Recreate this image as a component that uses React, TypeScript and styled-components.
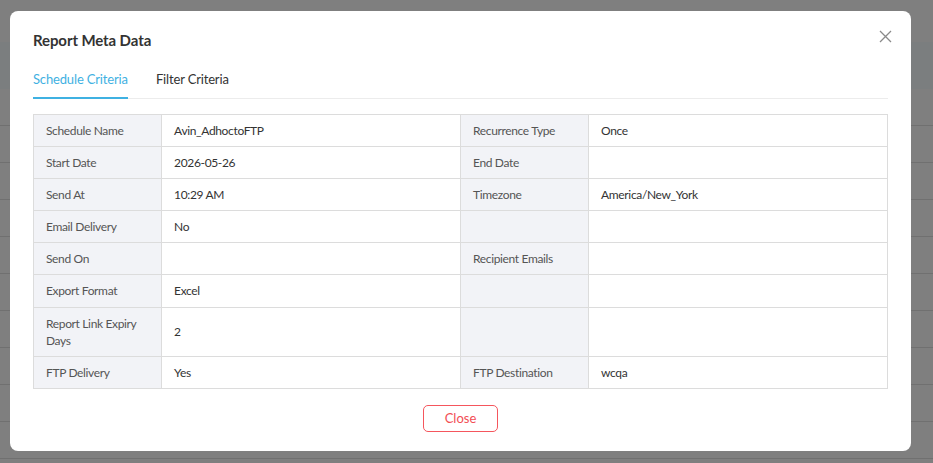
import styled, { createGlobalStyle } from 'styled-components'

const GlobalStyle = createGlobalStyle`
  html, body {
    margin: 0;
    padding: 0;
    background: #fefefe;
    font-family: Lato, 'Open Sans', sans-serif;
  }
  * {
    box-sizing: border-box;
  }
`

type Field = { label: string; value: string }
type Row = { left: Field; right: Field }

const rows: Row[] = [
  { left: { label: 'Schedule Name', value: 'Avin_AdhoctoFTP' }, right: { label: 'Recurrence Type', value: 'Once' } },
  { left: { label: 'Start Date', value: '2026-05-26' }, right: { label: 'End Date', value: '' } },
  { left: { label: 'Send At', value: '10:29 AM' }, right: { label: 'Timezone', value: 'America/New_York' } },
  { left: { label: 'Email Delivery', value: 'No' }, right: { label: '', value: '' } },
  { left: { label: 'Send On', value: '' }, right: { label: 'Recipient Emails', value: '' } },
  { left: { label: 'Export Format', value: 'Excel' }, right: { label: '', value: '' } },
  { left: { label: 'Report Link Expiry Days', value: '2' }, right: { label: '', value: '' } },
  { left: { label: 'FTP Delivery', value: 'Yes' }, right: { label: 'FTP Destination', value: 'wcqa' } },
]

const Page = styled.div`
  width: 933px;
  height: 463px;
  overflow: hidden;
  padding-top: 42px;
  background: #fefefe;
`

const PageHeader = styled.div`
  height: 47px;
  background: #f6fcff;
`

const PageRow = styled.div`
  height: 37px;
  border-bottom: 1px solid #e0e0e0;
`

const Overlay = styled.div`
  position: fixed;
  inset: 0;
  background: rgba(0, 0, 0, 0.5);
  padding: 11px 0 0 10px;
`

const Modal = styled.div`
  position: relative;
  width: 901px;
  height: 440px;
  background: #fff;
  border-radius: 8px;
  padding: 18px 23px 19px;
  display: flex;
  flex-direction: column;
`

const Title = styled.h2`
  margin: 0 0 12px;
  font-size: 15px;
  line-height: 22px;
  font-weight: 700;
  letter-spacing: -0.1px;
  color: #333;
`

const CloseIcon = styled.button`
  position: absolute;
  top: 13px;
  right: 14px;
  width: 24px;
  height: 24px;
  padding: 0;
  border: none;
  background: none;
  display: flex;
  align-items: center;
  justify-content: center;
  cursor: pointer;
`

const TabList = styled.div`
  display: flex;
  gap: 28px;
  border-bottom: 1px solid #ececec;
`

const Tab = styled.div<{ $active?: boolean }>`
  padding: 6px 0 8px;
  margin-bottom: -1px;
  font-size: 13px;
  line-height: 20px;
  letter-spacing: -0.15px;
  color: ${({ $active }) => ($active ? '#3fb1e2' : '#333')};
  border-bottom: 2px solid ${({ $active }) => ($active ? '#3fb1e2' : 'transparent')};
`

const Table = styled.table`
  margin-top: 15px;
  width: 100%;
  border-collapse: collapse;
  table-layout: fixed;
  font-size: 12px;
`

const Cell = styled.td<{ $label?: boolean }>`
  border: 1px solid #dcdcdc;
  padding: 7px 12px;
  line-height: 17.1px;
  letter-spacing: -0.35px;
  vertical-align: middle;
  background: ${({ $label }) => ($label ? '#f2f3f7' : '#fff')};
  color: ${({ $label }) => ($label ? '#555' : '#333')};
`

const Footer = styled.div`
  margin-top: 16px;
  display: flex;
  justify-content: center;
`

const CloseButton = styled.button`
  width: 75px;
  height: 27px;
  border: 1px solid #f5565d;
  border-radius: 5px;
  background: #fff;
  color: #f24d54;
  font-family: inherit;
  font-size: 13px;
  cursor: pointer;
`

export default function App() {
  return (
    <>
      <GlobalStyle />
      <Page>
        <PageHeader />
        {Array.from({ length: 10 }).map((_, i) => (
          <PageRow key={i} />
        ))}
      </Page>
      <Overlay>
        <Modal>
          <Title>Report Meta Data</Title>
          <CloseIcon aria-label="Close">
            <svg width="13" height="13" viewBox="0 0 13 13">
              <path d="M1 1 L12 12 M12 1 L1 12" stroke="#8a8a8a" strokeWidth="1.3" fill="none" />
            </svg>
          </CloseIcon>
          <TabList>
            <Tab $active>Schedule Criteria</Tab>
            <Tab>Filter Criteria</Tab>
          </TabList>
          <Table>
            <colgroup>
              <col style={{ width: '15%' }} />
              <col style={{ width: '35%' }} />
              <col style={{ width: '15%' }} />
              <col style={{ width: '35%' }} />
            </colgroup>
            <tbody>
              {rows.map((r, i) => (
                <tr key={i}>
                  <Cell $label>{r.left.label}</Cell>
                  <Cell>{r.left.value}</Cell>
                  <Cell $label>{r.right.label}</Cell>
                  <Cell>{r.right.value}</Cell>
                </tr>
              ))}
            </tbody>
          </Table>
          <Footer>
            <CloseButton>Close</CloseButton>
          </Footer>
        </Modal>
      </Overlay>
    </>
  )
}
